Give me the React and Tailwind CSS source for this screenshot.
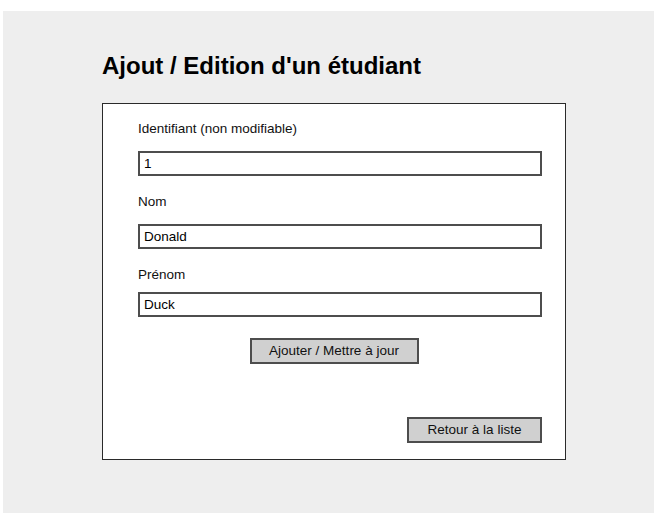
import { useState } from 'react'

const FIELDS = [
  { label: 'Identifiant (non modifiable)', value: '1', readOnly: true, gap: 'mt-[13px]' },
  { label: 'Nom', value: 'Donald', gap: 'mt-[13px]' },
  { label: 'Prénom', value: 'Duck', gap: 'mt-[8px]' },
]

const font = { fontFamily: '"Liberation Sans", Arial, sans-serif' }

export default function App() {
  const [values, setValues] = useState(FIELDS.map(f => f.value))

  return (
    <div className="min-h-screen bg-white pt-[11px] pl-[3px]" style={font}>
      <div className="w-[651px] h-[502px] bg-[#eeeeee] pl-[99px] pt-[41px]">
        <h1 className="text-[24px] leading-[28px] font-bold text-black">
          Ajout / Edition d'un étudiant
        </h1>

        {/* form card */}
        <div className="mt-[23px] w-[464px] h-[357px] bg-white border border-[#2a2a2a] pl-[35px] pr-[23px] pt-[16px] flex flex-col">
          {FIELDS.map((f, i) => (
            <div key={f.label} className={i === 0 ? '' : 'mt-[17px]'}>
              <label className="block text-[13.5px] leading-[18px] text-[#111]">{f.label}</label>
              <input
                className={`${f.gap} block w-full h-[25px] border-2 border-[#4d4d4d] bg-white px-[4px] text-[13.5px] text-black outline-none`}
                value={values[i]}
                readOnly={f.readOnly}
                onChange={e => setValues(v => v.map((x, j) => (j === i ? e.target.value : x)))}
              />
            </div>
          ))}

          <div className="mt-[21px] flex justify-center -ml-[12px]">
            <button className="w-[169px] h-[26px] bg-[#d0d0d0] border-2 border-[#4d4d4d] text-[13.5px] text-[#111]">
              Ajouter / Mettre à jour
            </button>
          </div>

          <div className="mt-[53px] flex justify-end">
            <button className="w-[135px] h-[26px] bg-[#d0d0d0] border-2 border-[#4d4d4d] text-[13.5px] text-[#111]">
              Retour à la liste
            </button>
          </div>
        </div>
      </div>
    </div>
  )
}
